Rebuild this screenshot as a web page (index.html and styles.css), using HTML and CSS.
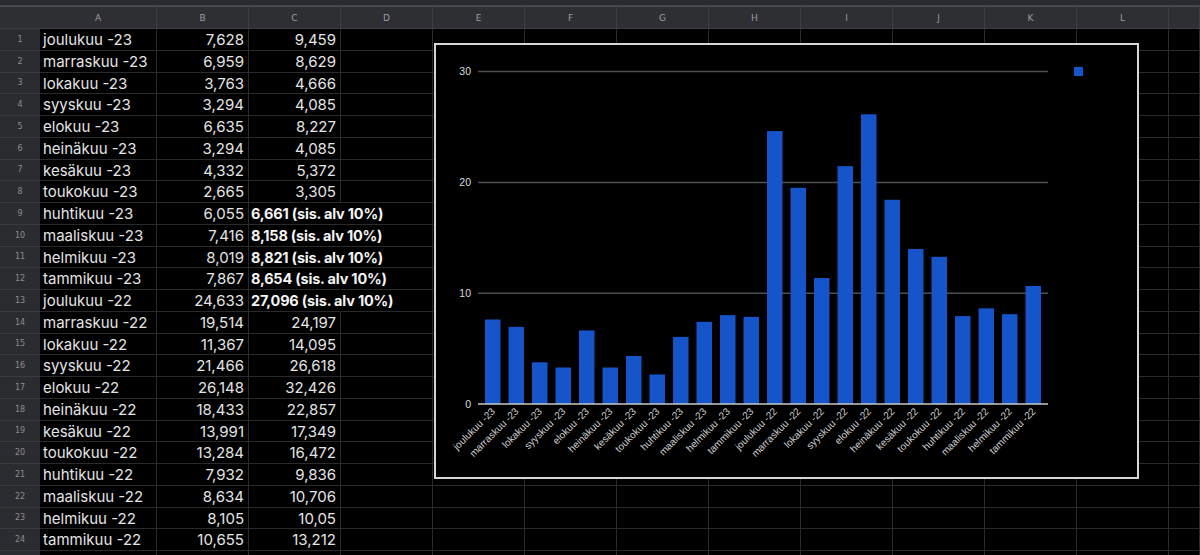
FILE: index.html
```html
<!DOCTYPE html>
<html lang="fi">
<head>
  <meta charset="UTF-8">
  <meta name="viewport" content="width=device-width, initial-scale=1.0">
  <title>Sähkönkulutus</title>
  <link rel="stylesheet" href="styles.css">
</head>
<body>
  <div class="page">
    <div class="topbar"></div>
    <div class="sheet" id="sheet">
      <!-- Filled by JavaScript -->
    </div>
    <div class="chart">
      <svg id="chart" width="701" height="432" viewBox="436 45 701 432" xmlns="http://www.w3.org/2000/svg"></svg>
    </div>
  </div>

  <script>
    document.addEventListener('DOMContentLoaded', function() {
      const sheet = document.getElementById('sheet');
      const chart = document.getElementById('chart');
      const SVG_NS = 'http://www.w3.org/2000/svg';

      // last column is only partly visible, so no letter shows
      const columns = ['A', 'B', 'C', 'D', 'E', 'F', 'G', 'H', 'I', 'J', 'K', 'L', ''];

      // month, kWh, price (price with note when it includes vat)
      const data = [
        ['joulukuu -23', '7,628', '9,459'],
        ['marraskuu -23', '6,959', '8,629'],
        ['lokakuu -23', '3,763', '4,666'],
        ['syyskuu -23', '3,294', '4,085'],
        ['elokuu -23', '6,635', '8,227'],
        ['heinäkuu -23', '3,294', '4,085'],
        ['kesäkuu -23', '4,332', '5,372'],
        ['toukokuu -23', '2,665', '3,305'],
        ['huhtikuu -23', '6,055', '6,661 (sis. alv 10%)', true],
        ['maaliskuu -23', '7,416', '8,158 (sis. alv 10%)', true],
        ['helmikuu -23', '8,019', '8,821 (sis. alv 10%)', true],
        ['tammikuu -23', '7,867', '8,654 (sis. alv 10%)', true],
        ['joulukuu -22', '24,633', '27,096 (sis. alv 10%)', true],
        ['marraskuu -22', '19,514', '24,197'],
        ['lokakuu -22', '11,367', '14,095'],
        ['syyskuu -22', '21,466', '26,618'],
        ['elokuu -22', '26,148', '32,426'],
        ['heinäkuu -22', '18,433', '22,857'],
        ['kesäkuu -22', '13,991', '17,349'],
        ['toukokuu -22', '13,284', '16,472'],
        ['huhtikuu -22', '7,932', '9,836'],
        ['maaliskuu -22', '8,634', '10,706'],
        ['helmikuu -22', '8,105', '10,05'],
        ['tammikuu -22', '10,655', '13,212']
      ];

      function addCell(className, text) {
        const div = document.createElement('div');
        div.className = className;
        if (text !== undefined) div.textContent = text;
        sheet.appendChild(div);
        return div;
      }

      // Header row
      addCell('hd corner');
      columns.forEach(col => addCell('hd', col));

      // Data rows (one extra, cut off at the bottom)
      for (let r = 0; r < 25; r++) {
        const row = data[r];
        addCell('rn', row ? r + 1 : '');
        columns.forEach((col, c) => {
          if (!row) return addCell('cell');
          if (c === 0) return addCell('cell text', row[0]);
          if (c === 1) return addCell('cell num', row[1]);
          if (c === 2) return addCell(row[3] ? 'cell note' : 'cell num', row[2]);
          addCell('cell');
        });
      }

      // Chart
      const baseY = 404;
      const perUnit = 11.08;
      const plotLeft = 478;
      const plotRight = 1048;
      const slotLeft = 481;
      const slot = 23.5;
      const barWidth = 15.5;

      function el(name, attrs, text) {
        const node = document.createElementNS(SVG_NS, name);
        Object.keys(attrs).forEach(k => node.setAttribute(k, attrs[k]));
        if (text !== undefined) node.textContent = text;
        chart.appendChild(node);
        return node;
      }

      [30, 20, 10].forEach(v => {
        const y = baseY - v * perUnit;
        el('line', { x1: plotLeft, x2: plotRight, y1: y, y2: y, class: 'grid' });
        el('text', { x: 471, y: y + 3.5, class: 'ytick' }, v);
      });
      el('text', { x: 471, y: baseY + 3.5, class: 'ytick' }, 0);

      data.forEach((row, i) => {
        const value = parseFloat(row[1].replace(',', '.'));
        const h = value * perUnit;
        const x = slotLeft + i * slot + (slot - barWidth) / 2;
        el('rect', { x: x, y: baseY - h, width: barWidth, height: h, class: 'bar' });

        const lx = x + barWidth / 2 + 3;
        const ly = 412;
        el('text', { x: lx, y: ly, class: 'xtick', transform: `rotate(-45 ${lx} ${ly})` }, row[0]);
      });

      el('line', { x1: plotLeft, x2: plotRight, y1: baseY, y2: baseY, class: 'axis' });

      // Legend marker
      el('rect', { x: 1074, y: 67, width: 9, height: 9, class: 'bar' });
    });
  </script>
</body>
</html>
```

FILE: styles.css
```css
* {
  box-sizing: border-box;
}
body {
  margin: 0;
  background-color: #000;
  overflow: hidden;
  font-family: Inter, 'Open Sans', sans-serif;
}
.page {
  position: relative;
  width: 1200px;
  height: 555px;
  overflow: hidden;
}
.topbar {
  height: 7px;
  background-color: #2a2b2f;
  border-bottom: 2px solid #47484d;
}
.sheet {
  display: grid;
  grid-template-columns: 40px 117px repeat(11, 92px) 31px;
  grid-template-rows: 22px repeat(25, 21.75px);
}
.hd {
  background-color: #2e2f33;
  border-right: 1px solid #3c3d42;
  border-bottom: 1px solid #3c3d42;
  color: #9c9da2;
  font-family: 'DejaVu Sans', sans-serif;
  font-size: 9px;
  display: flex;
  align-items: center;
  justify-content: center;
}
.corner {
  border-right: none;
}
.rn {
  background-color: #2b2c30;
  border-bottom: 1px solid #3a3b40;
  color: #8c8d92;
  font-family: 'DejaVu Sans', sans-serif;
  font-size: 8px;
  display: flex;
  align-items: center;
  justify-content: center;
}
.cell {
  border-right: 1px solid #2a2a2c;
  border-bottom: 1px solid #2a2a2c;
  color: #e4e4e4;
  font-size: 15px;
  line-height: 21px;
  padding: 0 4px;
  white-space: nowrap;
}
.text {
  padding-left: 3px;
}
.num {
  text-align: right;
}
.note {
  font-weight: 700;
  font-size: 14.5px;
  letter-spacing: -0.2px;
  color: #f4f4f4;
  padding-left: 2px;
  border-right-color: transparent;
  overflow: visible;
}
.chart {
  position: absolute;
  left: 434px;
  top: 43px;
  width: 705px;
  height: 436px;
  border: 2px solid #d6d6d6;
  background-color: #000;
}
.chart svg {
  display: block;
}
.grid {
  stroke: #4f4f4f;
  stroke-width: 1.5;
}
.axis {
  stroke: #c8c8c8;
  stroke-width: 1.5;
}
.bar {
  fill: #1654c9;
}
.ytick {
  fill: #dcdcdc;
  font-family: 'Liberation Sans', Arial, sans-serif;
  font-size: 10.5px;
  text-anchor: end;
}
.xtick {
  fill: #cfcfcf;
  font-family: 'Liberation Sans', Arial, sans-serif;
  font-size: 10px;
  text-anchor: end;
}
```
